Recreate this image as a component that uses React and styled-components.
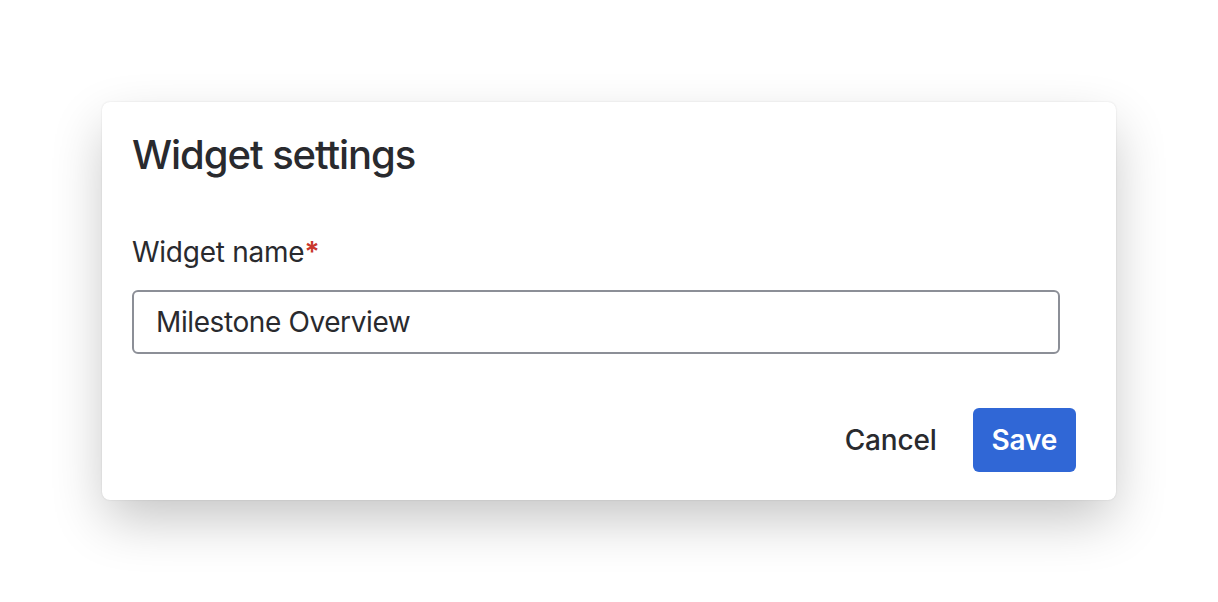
import React from 'react';
import styled, { createGlobalStyle } from 'styled-components';

const GlobalStyle = createGlobalStyle`
  html, body {
    margin: 0;
    padding: 0;
    background: #ffffff;
  }

  body {
    font-family: Inter, 'Noto Sans', 'Liberation Sans', sans-serif;
    color: #292a2e;
  }

  * {
    box-sizing: border-box;
  }
`;

const Page = styled.div`
  width: 1218px;
  height: 602px;
  padding: 102px 0 0 102px;
  overflow: hidden;
`;

const Modal = styled.section`
  width: 1014px;
  height: 398px;
  background: #ffffff;
  border-radius: 8px;
  box-shadow: 0 22px 54px -4px rgba(0, 0, 0, 0.24), 0 0 2px rgba(0, 0, 0, 0.12);
  display: flex;
  flex-direction: column;
`;

const Header = styled.header`
  padding: 25px 30px 0;
`;

const Title = styled.h1`
  margin: 0;
  font-size: 40px;
  line-height: 56px;
  font-weight: 500;
  letter-spacing: -1.05px;
`;

const Body = styled.div`
  padding: 51px 30px 0;
  display: flex;
  flex-direction: column;
`;

const Label = styled.label`
  font-size: 28px;
  line-height: 36px;
  font-weight: 400;
  letter-spacing: -0.25px;
  margin-bottom: 20px;
`;

const Required = styled.span`
  color: #c9372c;
  font-weight: 600;
`;

const Input = styled.input`
  width: 928px;
  height: 64px;
  border: 2px solid #8c8f97;
  border-radius: 6px;
  padding: 0 22px;
  font-family: inherit;
  font-size: 28px;
  letter-spacing: -0.4px;
  color: #292a2e;
  background: #ffffff;
  outline: none;
`;

const Footer = styled.footer`
  padding: 54px 40px 28px;
  display: flex;
  justify-content: flex-end;
  gap: 16px;
`;

const Button = styled.button`
  height: 64px;
  padding: 0 ${(props) => (props.$primary ? '19px' : '20px')};
  border: none;
  border-radius: 6px;
  font-family: inherit;
  font-size: 28px;
  font-weight: ${(props) => (props.$primary ? 600 : 500)};
  letter-spacing: -0.2px;
  background: ${(props) => (props.$primary ? '#3067d6' : 'transparent')};
  color: ${(props) => (props.$primary ? '#ffffff' : '#292a2e')};
  cursor: pointer;
`;

function App() {
  return (
    <Page>
      <GlobalStyle />
      <Modal>
        <Header>
          <Title>Widget settings</Title>
        </Header>
        <Body>
          <Label htmlFor="widget-name">
            Widget name<Required>*</Required>
          </Label>
          <Input id="widget-name" defaultValue="Milestone Overview" />
        </Body>
        <Footer>
          <Button>Cancel</Button>
          <Button $primary>Save</Button>
        </Footer>
      </Modal>
    </Page>
  );
}

export default App;
